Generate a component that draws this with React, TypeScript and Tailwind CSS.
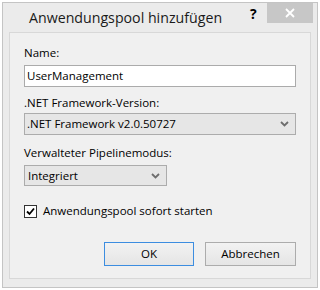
import React from "react";

function Chevron() {
  return (
    <svg width="9" height="6" viewBox="0 0 9 6">
      <path d="M1 1 L4.5 4.5 L8 1" fill="none" stroke="#6d6d6d" strokeWidth="1.8" />
    </svg>
  );
}

export default function App() {
  return (
    <div className="w-[320px] h-[290px] bg-white p-[2px] font-['Open_Sans',sans-serif] text-black">
      <div className="w-[316px] h-[286px] border border-[#c4c4c4] bg-[#ebebeb] flex flex-col">
        <div className="h-[29px] flex items-start relative">
          <div className="ml-[26px] mt-[5px] text-[14.2px] leading-[20px] text-[#1a1a1a]">Anwendungspool hinzufügen</div>
          <div className="absolute left-[247px] top-[2px] text-[14px] font-bold leading-[18px]">?</div>
          <div className="absolute left-[264px] top-0 w-[46px] h-[20px] bg-[#c7c7c7] flex items-center justify-center">
            <svg width="10" height="10" viewBox="0 0 10 10">
              <path d="M1 1 L9 9 M9 1 L1 9" stroke="#ffffff" strokeWidth="1.8" />
            </svg>
          </div>
        </div>
        <div className="ml-[6px] w-[302px] h-[247px] border border-[#d8d8d8] bg-[#f0f0f0] px-[14px] flex flex-col text-[11.5px] leading-[16px]">
          <div className="mt-[12px]">Name:</div>
          <div className="mt-[4px] h-[22px] border border-[#ababab] bg-white flex items-center px-[2px]">UserManagement</div>
          <div className="mt-[8px]">.NET Framework-Version:</div>
          <div className="mt-[2px] h-[22px] border border-[#acacac] bg-[#e6e6e6] flex items-center justify-between pl-[2px] pr-[6px]">
            <span>.NET Framework v2.0.50727</span>
            <Chevron />
          </div>
          <div className="mt-[10px]">Verwalteter Pipelinemodus:</div>
          <div className="mt-[4px] w-[143px] h-[21px] border border-[#acacac] bg-[#e6e6e6] flex items-center justify-between pl-[3px] pr-[6px]">
            <span>Integriert</span>
            <Chevron />
          </div>
          <div className="mt-[17px] flex items-center gap-[6px]">
            <div className="w-[13px] h-[13px] border border-[#333333] bg-white flex items-center justify-center">
              <svg width="9" height="9" viewBox="0 0 9 9">
                <path d="M1 4.5 L3.5 7 L8 1.5" fill="none" stroke="#000" strokeWidth="1.8" />
              </svg>
            </div>
            <span>Anwendungspool sofort starten</span>
          </div>
          <div className="mt-[23px] flex justify-end gap-[11px]">
            <div className="w-[90px] h-[24px] border border-[#3c8de0] bg-gradient-to-b from-[#f2f2f2] to-[#e5e5e5] flex items-center justify-center">OK</div>
            <div className="w-[91px] h-[24px] border border-[#acacac] bg-gradient-to-b from-[#f2f2f2] to-[#e5e5e5] flex items-center justify-center">Abbrechen</div>
          </div>
        </div>
      </div>
    </div>
  );
}
